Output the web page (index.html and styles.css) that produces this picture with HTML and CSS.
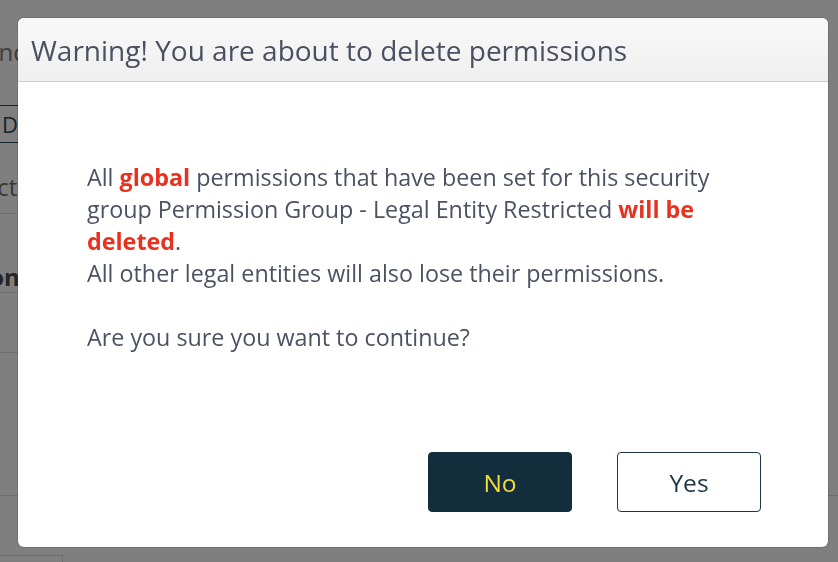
FILE: index.html
```html
<!DOCTYPE html>
<html lang="en">
<head>
<meta charset="utf-8">
<title>Delete permissions</title>
<link rel="stylesheet" href="styles.css">
</head>
<body>
<div class="page">
  <div class="pg-head"><span class="pg-head-text">Find</span></div>
  <div class="pg-tabs"><span class="pg-tab">Details</span></div>
  <div class="pg-row pg-sub"><span class="pg-sub-text">Select</span></div>
  <div class="pg-row pg-bold"><span class="pg-bold-text">Permission</span></div>
  <div class="pg-row pg-r3"></div>
  <div class="pg-row pg-r4"></div>
  <div class="pg-foot"><div class="pg-box"></div></div>
</div>

<div class="overlay">
  <div class="modal" role="dialog" aria-labelledby="modal-title">
    <div class="modal-header">
      <h2 class="modal-title" id="modal-title">Warning! You are about to delete permissions</h2>
    </div>
    <div class="modal-body">
      <p class="msg">All <strong class="hl">global</strong> permissions that have been set for this security group Permission Group - Legal Entity Restricted <strong class="hl">will be deleted</strong>.<br>All other legal entities will also lose their permissions.</p>
      <p class="msg">Are you sure you want to continue?</p>
    </div>
    <div class="modal-footer">
      <button class="btn btn-no" type="button">No</button>
      <button class="btn btn-yes" type="button">Yes</button>
    </div>
  </div>
</div>
</body>
</html>
```

FILE: styles.css
```css
* { box-sizing: border-box; }

html, body {
  margin: 0;
  padding: 0;
  height: 100%;
  overflow: hidden;
  background: #ffffff;
  font-family: "Open Sans", "Noto Sans", "Liberation Sans", sans-serif;
}

/* ---------- underlying page ---------- */
.page {
  display: flex;
  flex-direction: column;
  width: 100%;
}

.pg-head {
  height: 105px;
  padding-top: 36px;
  font-size: 24px;
  line-height: 32px;
  color: #7a7a7a;
  white-space: nowrap;
}
.pg-head-text { margin-left: -20px; }

.pg-tabs {
  width: 400px;
  height: 38px;
  border-top: 1px solid #2c4658;
  border-bottom: 1px solid #2c4658;
  display: flex;
  align-items: center;
  font-size: 22px;
  color: #2d4558;
  white-space: nowrap;
}
.pg-tab { margin-left: 2px; }

.pg-row {
  width: 700px;
  border-bottom: 1px solid #dcdcdc;
  white-space: nowrap;
}

.pg-sub {
  height: 71px;
  padding-top: 28px;
  font-size: 24px;
  line-height: 32px;
  color: #707070;
}
.pg-sub-text { margin-left: -49px; }

.pg-bold {
  height: 79px;
  padding-top: 50px;
  font-size: 24px;
  line-height: 26px;
  font-weight: 700;
  color: #4a4a4a;
}
.pg-bold-text { margin-left: -113px; }

.pg-r3 { height: 60px; }
.pg-r4 { height: 143px; width: 100%; }

.pg-foot {
  padding-top: 59px;
}
.pg-box {
  width: 63px;
  height: 40px;
  border: 1px solid #d8d8d8;
  border-left: none;
}

/* ---------- modal ---------- */
.overlay {
  position: fixed;
  inset: 0;
  background: rgba(0, 0, 0, 0.5);
  display: flex;
  padding: 18px 10px 15px 18px;
}

.modal {
  flex: 1;
  display: flex;
  flex-direction: column;
  background: #ffffff;
  border-radius: 6px;
  overflow: hidden;
  box-shadow: 0 0 0 1px rgba(0, 0, 0, 0.12);
}

.modal-header {
  height: 64px;
  flex: none;
  display: flex;
  align-items: center;
  padding: 0 13px;
  background: linear-gradient(#f9f9f9, #efefef);
  border-bottom: 1px solid #cfcfcf;
}

.modal-title {
  margin: 0;
  font-size: 28px;
  font-weight: 400;
  color: #4a5060;
  white-space: nowrap;
}

.modal-body {
  flex: 1;
  padding: 79px 69px 0 69px;
}

.msg {
  margin: 0 0 32px 0;
  font-size: 23.3px;
  line-height: 32px;
  color: #4b5262;
}

.hl {
  color: #e8311f;
  font-weight: 700;
}

.modal-footer {
  flex: none;
  display: flex;
  justify-content: flex-end;
  gap: 45px;
  padding: 0 67px 35px 0;
}

.btn {
  width: 144px;
  height: 60px;
  border-radius: 4px;
  font-family: inherit;
  font-size: 24.5px;
  cursor: pointer;
}

.btn-no {
  background: #122d3c;
  border: 1px solid #122d3c;
  color: #f4dc3a;
}

.btn-yes {
  background: #ffffff;
  border: 1px solid #1d3443;
  color: #1d3443;
}
```
